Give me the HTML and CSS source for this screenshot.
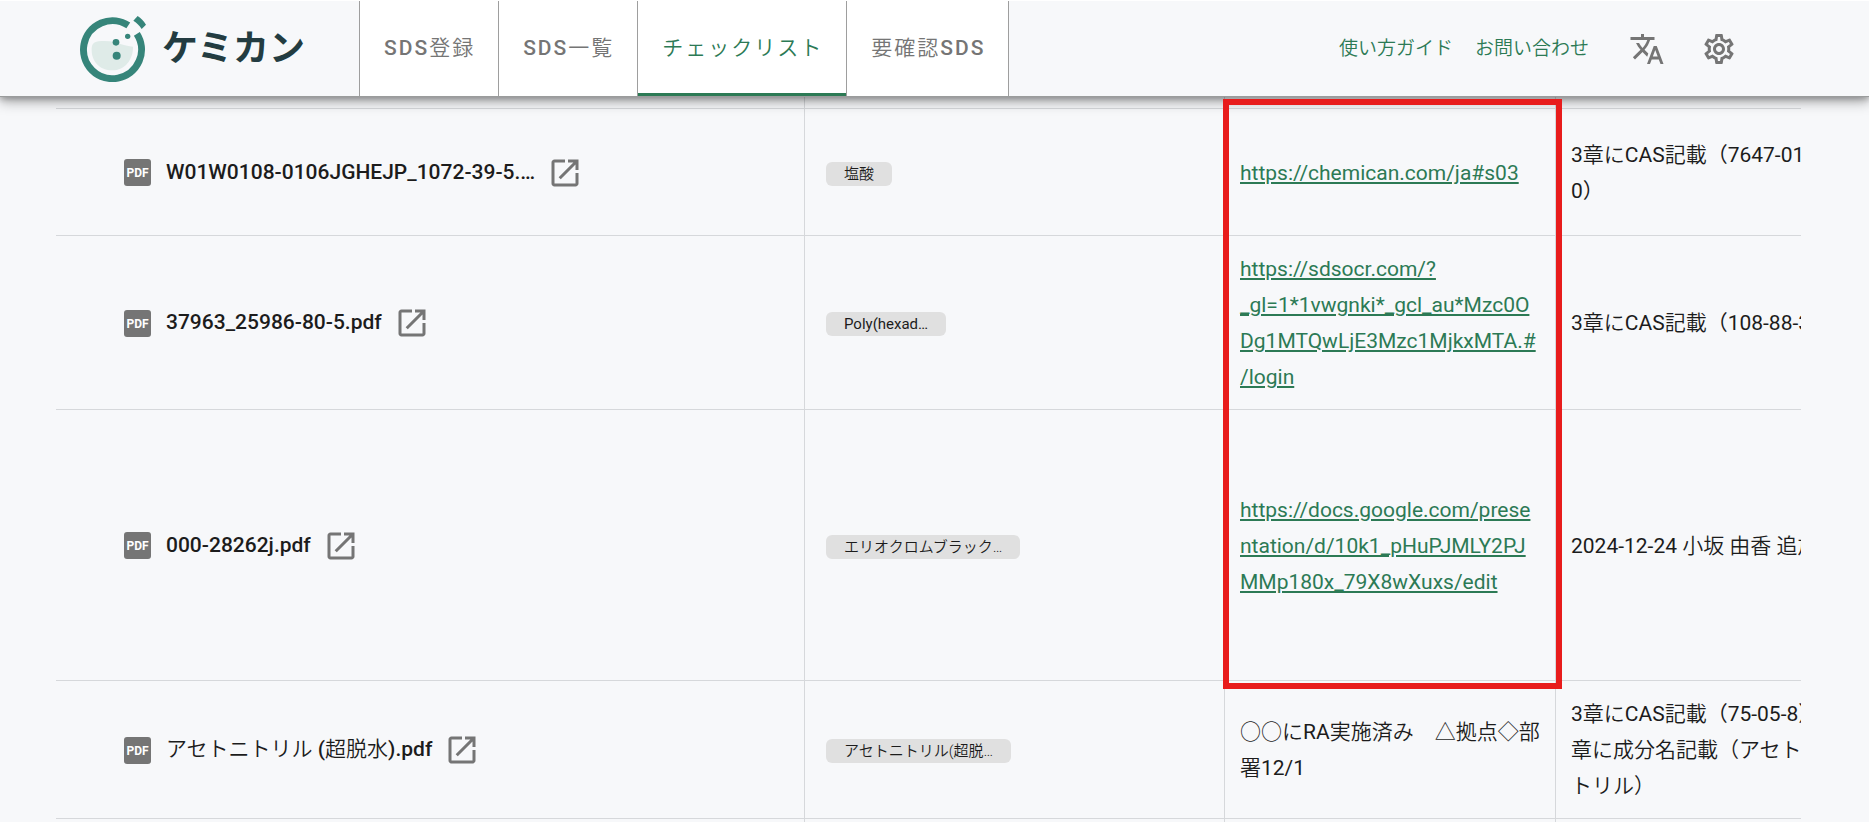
FILE: index.html
```html
<!DOCTYPE html>
<html lang="ja">
<head>
    <meta charset="UTF-8">
    <meta name="viewport" content="width=device-width, initial-scale=1.0">
    <title>ケミカン チェックリスト</title>
    <link rel="stylesheet" href="styles.css">
</head>
<body>
    <svg class="sprite" aria-hidden="true">
        <symbol id="icon-open" viewBox="0 0 24 24">
            <path d="M19 19H5V5h7V3H5c-1.11 0-2 .9-2 2v14c0 1.1.89 2 2 2h14c1.1 0 2-.9 2-2v-7h-2v7zM14 3v2h3.59l-9.83 9.83 1.41 1.41L19 6.41V10h2V3h-7z"/>
        </symbol>
    </svg>

    <header class="header">
        <a class="logo" href="#">
            <svg class="logo-mark" viewBox="240 48 198 198" aria-hidden="true">
                <path d="M275 150c0-16 4-23 20-26 17-2 34-1 51 2 17 8 34 11 53 14 1 38-24 71-62 71s-62-27-62-61z" fill="#dfebe8"/>
                <path d="M384.900 76A87 87 0 1 0 410.500 101.600" fill="none" stroke="#36857a" stroke-width="21"/>
                <path d="M413 48c10 7 18 15 25 26l-13 13c-7-11-14-18-25-25z" fill="#36857a"/>
                <circle cx="348" cy="127" r="10" fill="#36857a"/>
                <circle cx="383" cy="109" r="8" fill="#36857a"/>
                <circle cx="350" cy="167" r="12" fill="#36857a"/>
            </svg>
            <span class="logo-text">ケミカン</span>
        </a>
        <nav class="tabs">
            <a class="tab" href="#">SDS<span class="ja">登録</span></a>
            <a class="tab" href="#">SDS<span class="ja">一覧</span></a>
            <a class="tab active" href="#"><span class="ja">チェックリスト</span></a>
            <a class="tab" href="#"><span class="ja">要確認</span>SDS</a>
        </nav>
        <div class="tools">
            <a class="tool-link ja" href="#">使い方ガイド</a>
            <a class="tool-link ja" href="#">お問い合わせ</a>
            <button class="icon-btn lang" aria-label="言語">
                <svg class="icon" viewBox="0 0 24 24"><path d="m12.87 15.07-2.54-2.51.03-.03c1.74-1.94 2.98-4.17 3.71-6.53H17V4h-7V2H8v2H1v1.990h11.170C11.500 7.920 10.440 9.750 9 11.350 8.070 10.320 7.300 9.190 6.690 8h-2c.73 1.630 1.730 3.170 2.980 4.560l-5.090 5.020L4 19l5-5 3.110 3.110.76-2.040zM18.500 10h-2L12 22h2l1.120-3h4.750L21 22h2l-4.500-12zm-2.620 7 1.620-4.330L19.120 17h-3.240z"/></svg>
            </button>
            <button class="icon-btn" aria-label="設定">
                <svg class="icon" viewBox="0 0 24 24"><path d="M19.43 12.98c.04-.32.07-.64.07-.98 0-.34-.03-.66-.07-.98l2.11-1.65c.19-.15.24-.42.12-.64l-2-3.46c-.09-.16-.26-.25-.44-.25-.06 0-.12.01-.17.03l-2.49 1c-.52-.4-1.08-.73-1.69-.98l-.38-2.65C14.46 2.18 14.25 2 14 2h-4c-.25 0-.46.18-.49.42l-.38 2.65c-.61.25-1.17.59-1.69.98l-2.49-1c-.06-.02-.12-.03-.18-.03-.17 0-.34.09-.43.25l-2 3.46c-.13.22-.07.49.12.64l2.11 1.65c-.04.32-.07.65-.07.98 0 .33.03.66.07.98l-2.11 1.65c-.19.15-.24.42-.12.64l2 3.46c.09.16.26.25.44.25.06 0 .12-.01.17-.03l2.49-1c.52.4 1.08.73 1.69.98l.38 2.65c.03.24.24.42.49.42h4c.25 0 .46-.18.49-.42l.38-2.65c.61-.25 1.17-.59 1.69-.98l2.49 1c.06.02.12.03.18.03.17 0 .34-.09.43-.25l2-3.46c.12-.22.07-.49-.12-.64l-2.11-1.65zm-1.98-1.71c.04.31.05.52.05.73 0 .21-.02.43-.05.73l-.14 1.13.89.7 1.08.84-.7 1.21-1.27-.51-1.04-.42-.9.68c-.43.32-.84.56-1.25.73l-1.06.43-.16 1.13-.2 1.35h-1.4l-.19-1.35-.16-1.13-1.06-.43c-.43-.18-.83-.41-1.23-.71l-.91-.7-1.06.43-1.27.51-.7-1.21 1.08-.84.89-.7-.14-1.13c-.03-.31-.05-.54-.05-.74s.02-.43.05-.73l.14-1.13-.89-.7-1.08-.84.7-1.21 1.27.51 1.04.42.9-.68c.43-.32.84-.56 1.25-.73l1.06-.43.16-1.13.2-1.35h1.39l.19 1.35.16 1.13 1.06.43c.43.18.83.41 1.23.71l.91.7 1.06-.43 1.27-.51.7 1.21-1.07.85-.89.7.14 1.13zM12 8c-2.21 0-4 1.79-4 4s1.79 4 4 4 4-1.79 4-4-1.79-4-4-4zm0 6c-1.1 0-2-.9-2-2s.9-2 2-2 2 .9 2 2-.9 2-2 2z"/></svg>
            </button>
        </div>
    </header>

    <main class="list">
        <table class="sds-table">
            <colgroup>
                <col>
                <col class="col-name">
                <col class="col-note">
                <col class="col-memo">
            </colgroup>
            <tbody>
                <tr class="row-edge"><td></td><td></td><td></td><td></td></tr>
                <tr class="row-mid">
                    <td>
                        <div class="file">
                            <span class="pdf">PDF</span>
                            <span class="file-name">W01W0108-0106JGHEJP_1072-39-5.…</span>
                            <button class="icon-btn" aria-label="開く"><svg class="icon"><use href="#icon-open"/></svg></button>
                        </div>
                    </td>
                    <td><span class="chip ja">塩酸</span></td>
                    <td><a class="link" href="#">https://chemican.com/ja#s03</a></td>
                    <td>3<span class="ja">章に</span>CAS<span class="ja">記載</span>（7647-01-<br>0）</td>
                </tr>
                <tr>
                    <td>
                        <div class="file">
                            <span class="pdf">PDF</span>
                            <span class="file-name">37963_25986-80-5.pdf</span>
                            <button class="icon-btn" aria-label="開く"><svg class="icon"><use href="#icon-open"/></svg></button>
                        </div>
                    </td>
                    <td><span class="chip">Poly(hexad…</span></td>
                    <td><a class="link" href="#">https://sdsocr.com/?_gl=1*1vwgnki*_gcl_au*Mzc0ODg1MTQwLjE3Mzc1MjkxMTA.#/login</a></td>
                    <td>3<span class="ja">章に</span>CAS<span class="ja">記載</span>（108-88-3）</td>
                </tr>
                <tr class="row-tall">
                    <td>
                        <div class="file">
                            <span class="pdf">PDF</span>
                            <span class="file-name">000-28262j.pdf</span>
                            <button class="icon-btn" aria-label="開く"><svg class="icon"><use href="#icon-open"/></svg></button>
                        </div>
                    </td>
                    <td><span class="chip ja">エリオクロムブラック…</span></td>
                    <td><a class="link" href="#">https://docs.google.com/presentation/d/10k1_pHuPJMLY2PJMMp180x_79X8wXuxs/edit</a></td>
                    <td>2024-12-24 <span class="ja">小坂 由香 追加</span></td>
                </tr>
                <tr>
                    <td>
                        <div class="file">
                            <span class="pdf">PDF</span>
                            <span class="file-name"><span class="ja">アセトニトリル</span> (<span class="ja">超脱水</span>).pdf</span>
                            <button class="icon-btn" aria-label="開く"><svg class="icon"><use href="#icon-open"/></svg></button>
                        </div>
                    </td>
                    <td><span class="chip ja">アセトニトリル(超脱…</span></td>
                    <td><span class="ja">○○に</span>RA<span class="ja">実施済み　△拠点◇部署</span>12/1</td>
                    <td>3<span class="ja">章に</span>CAS<span class="ja">記載</span>（75-05-8）3<span class="ja">章に成分名記載（アセトニトリル）</span></td>
                </tr>
                <tr class="row-end"><td></td><td></td><td></td><td></td></tr>
            </tbody>
        </table>
        <div class="highlight"></div>
    </main>
</body>
</html>
```
FILE: styles.css
```css
* {
    box-sizing: border-box;
}

body {
    margin: 0;
    background-color: #f7f8fa;
    color: #1c1c1c;
    font-family: Roboto, "Noto Sans CJK JP", sans-serif;
    font-size: 21px;
    line-height: 36px;
}

a {
    color: #2c7a55;
    text-decoration: none;
}

.sprite {
    display: none;
}

.ja {
    font-weight: 350;
}

/* header */
.header {
    position: relative;
    z-index: 1;
    display: flex;
    align-items: center;
    height: 96px;
    padding: 0 132px 0 80px;
    border-top: 1px solid white;
    background-color: #f7f8fa;
    box-shadow: 0 1px 0 #9a9c9c, 0 3px 6px rgba(0, 0, 0, 0.25), 0 6px 12px rgba(0, 0, 0, 0.3);
}

.logo {
    display: flex;
    align-items: center;
    gap: 16px;
    width: 279px;
    color: #233c41;
}

.logo-mark {
    width: 66px;
    height: 66px;
}

.logo-text {
    font-size: 36px;
    font-weight: 700;
}

.tabs {
    display: flex;
    align-self: stretch;
    border-left: 1px solid #9e9e9e;
}

.tab {
    display: flex;
    align-items: center;
    padding: 0 23px 2px 24px;
    border-right: 1px solid #9e9e9e;
    background-color: white;
    color: #757575;
    font-weight: 500;
    letter-spacing: 2px;
}

.tab.active {
    box-shadow: inset 0 -3px 0 #2c7a55;
    color: #2c7a55;
}

.tools {
    display: flex;
    align-items: center;
    gap: 22px;
    margin-left: auto;
}

.tool-link {
    font-size: 19px;
}

.icon-btn {
    display: flex;
    padding: 0;
    border: none;
    background: none;
    color: #757575;
    cursor: pointer;
}

.lang {
    margin: 0 14px 0 18px;
}

.icon {
    width: 36px;
    height: 36px;
    fill: currentColor;
}

/* table */
.list {
    position: relative;
    margin: 0 68px 0 56px;
    overflow: hidden;
}

.sds-table {
    width: calc(100% + 51px);
    table-layout: fixed;
    border-spacing: 0;
}

.col-name {
    width: 420px;
}

.col-note {
    width: 331px;
}

.col-memo {
    width: 296px;
}

td {
    padding: 15px 15px 14px;
    border-right: 1px solid #d6d8db;
    border-bottom: 1px solid #d6d8db;
    overflow-wrap: anywhere;
}

td:nth-child(2) {
    padding-left: 21px;
}

.row-edge td {
    height: 13px;
    padding: 0;
}

.row-end td {
    height: 3px;
    padding: 0;
    border-bottom: none;
}

.row-mid td {
    height: 127px;
}

.row-tall td {
    height: 271px;
}

.file {
    display: flex;
    align-items: center;
    padding-left: 53px;
}

.pdf {
    width: 27px;
    height: 27px;
    border-radius: 3px;
    background-color: #757575;
    color: white;
    font-size: 12px;
    font-weight: 700;
    line-height: 28px;
    text-align: center;
}

.file-name {
    margin: 0 12px 0 15px;
    padding-bottom: 2px;
    font-weight: 500;
}

.chip {
    display: inline-block;
    padding: 0 18px;
    border-radius: 6px;
    background-color: #e0e0e0;
    font-size: 15px;
    line-height: 24px;
    vertical-align: middle;
}

.link {
    text-decoration: underline;
}

/* red frame round the note column */
.highlight {
    position: absolute;
    z-index: 2;
    top: 3px;
    right: 239px;
    width: 339px;
    height: 590px;
    border: 6px solid #e81c1c;
}
```
